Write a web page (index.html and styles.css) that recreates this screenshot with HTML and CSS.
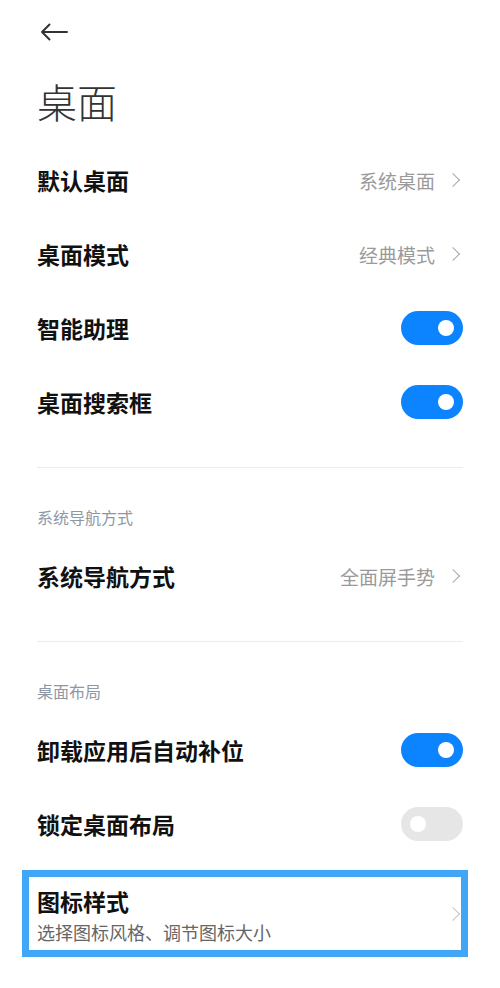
FILE: index.html
```html
<!DOCTYPE html>
<html lang="zh-CN">

<head>
  <meta charset="UTF-8">
  <title>桌面</title>
  <link rel="stylesheet" href="styles.css">
</head>

<body>
  <div id="page">
    <div class="topbar">
      <svg class="back" width="28" height="18" viewBox="0 0 28 18">
        <path d="M27 9H2M9.5 1.5L2 9l7.5 7.5" fill="none" stroke="#333" stroke-width="2" stroke-linecap="round" stroke-linejoin="round"/>
      </svg>
    </div>
    <h1 class="title">桌面</h1>

    <div class="group">
      <div class="row">
        <span class="label">默认桌面</span>
        <span class="value">系统桌面<i class="chev"></i></span>
      </div>
      <div class="row">
        <span class="label">桌面模式</span>
        <span class="value">经典模式<i class="chev"></i></span>
      </div>
      <div class="row">
        <span class="label">智能助理</span>
        <span class="switch on"></span>
      </div>
      <div class="row">
        <span class="label">桌面搜索框</span>
        <span class="switch on"></span>
      </div>
    </div>

    <div class="group">
      <div class="section">系统导航方式</div>
      <div class="row">
        <span class="label">系统导航方式</span>
        <span class="value">全面屏手势<i class="chev"></i></span>
      </div>
    </div>

    <div class="group last">
      <div class="section">桌面布局</div>
      <div class="row">
        <span class="label">卸载应用后自动补位</span>
        <span class="switch on"></span>
      </div>
      <div class="row">
        <span class="label">锁定桌面布局</span>
        <span class="switch"></span>
      </div>
      <div class="row two-line marked">
        <div class="text">
          <div class="label">图标样式</div>
          <div class="sub">选择图标风格、调节图标大小</div>
        </div>
        <i class="chev light"></i>
      </div>
    </div>
  </div>
</body>

</html>
```

FILE: styles.css
```css
* {
  box-sizing: border-box;
}

body {
  margin: 0;
  background: #fff;
  font-family: "Noto Sans CJK SC", "Noto Sans", sans-serif;
  color: #111;
}

#page {
  padding: 0 37px;
}

.topbar {
  height: 64px;
  display: flex;
  align-items: center;
  padding-left: 3px;
}

.title {
  margin: 0;
  height: 79px;
  font-size: 40px;
  font-weight: 300;
  color: #333;
  line-height: 74px;
}

.group {
  border-bottom: 1px solid #ececec;
  padding-bottom: 28px;
  margin-bottom: 38px;
}

.group.last {
  border-bottom: none;
  margin-bottom: 0;
}

.section {
  height: 22px;
  line-height: 22px;
  font-size: 16px;
  color: #8d97a5;
  margin-bottom: 11px;
}

.row {
  height: 74px;
  display: flex;
  align-items: center;
  justify-content: space-between;
}

.label {
  font-size: 23px;
  font-weight: 700;
  color: #111;
}

.value {
  display: flex;
  align-items: center;
  font-size: 19px;
  color: #9a9a9a;
}

.chev {
  display: inline-block;
  width: 10px;
  height: 10px;
  border-top: 1.5px solid #a8a8a8;
  border-right: 1.5px solid #a8a8a8;
  transform: rotate(45deg);
  margin-left: 13px;
  margin-right: 5px;
}

.chev.light {
  border-color: #c4c4c4;
  margin-left: 0;
}

.switch {
  position: relative;
  width: 62px;
  height: 34px;
  border-radius: 17px;
  background: #e6e6e6;
}

.switch::after {
  content: "";
  position: absolute;
  top: 9px;
  left: 9px;
  width: 16px;
  height: 16px;
  border-radius: 50%;
  background: #fff;
}

.switch.on {
  background: #0d84ff;
}

.switch.on::after {
  left: auto;
  right: 9px;
}

.two-line {
  position: relative;
  height: 86px;
  margin-top: 10px;
}

.two-line .sub {
  font-size: 18px;
  color: #666;
  margin-top: 1px;
}

.marked::after {
  content: "";
  position: absolute;
  top: -1px;
  left: -15px;
  right: -5px;
  bottom: 0;
  border: 7px solid #42a6f6;
  pointer-events: none;
}
```
